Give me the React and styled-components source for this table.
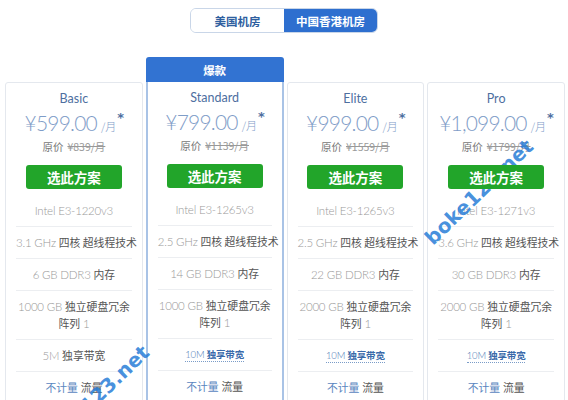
import React from "react"
import styled, { createGlobalStyle } from "styled-components"

const GlobalStyle = createGlobalStyle`
  html, body {
    margin: 0;
    padding: 0;
    background: #fff;
  }
  body {
    font-family: Lato, "Noto Sans CJK SC", "Liberation Sans", sans-serif;
    overflow: hidden;
  }
`

const Page = styled.div`
  position: relative;
  width: 568px;
  height: 400px;
  overflow: hidden;
`

const Toggle = styled.div`
  display: flex;
  width: 188px;
  height: 25px;
  margin: 8px auto 0;
  border: 1px solid #c9d6e8;
  border-radius: 6px;
  overflow: hidden;
  box-sizing: border-box;
`

const ToggleButton = styled.div`
  flex: 1;
  display: flex;
  align-items: center;
  justify-content: center;
  font-family: "Noto Sans CJK SC", sans-serif;
  font-size: 11.5px;
  font-weight: 700;
  color: ${p => (p.active ? "#fff" : "#2f5f9f")};
  background: ${p => (p.active ? "#2e6fcf" : "#fff")};
`

const Cards = styled.div`
  display: grid;
  grid-template-columns: repeat(4, minmax(0, 1fr));
  gap: 3px;
  padding: 0 3px 0 5px;
  margin-top: 24px;
  align-items: start;
`

const Column = styled.div`
  display: flex;
  flex-direction: column;
  min-width: 0;
  margin-top: ${p => (p.featured ? "0" : "25px")};
`

const Badge = styled.div`
  height: 25px;
  display: flex;
  align-items: center;
  justify-content: center;
  background: #3273d2;
  color: #fff;
  font-family: "Noto Sans CJK SC", sans-serif;
  font-size: 11.5px;
  font-weight: 700;
  border-radius: 3px 3px 0 0;
`

const Card = styled.div`
  background: #fff;
  border: 1px solid ${p => (p.featured ? "#a9c3e6" : "#e4e8ee")};
  border-width: ${p => (p.featured ? "0 2px 2px" : "1px")};
  border-radius: ${p => (p.featured ? "0" : "3px")};
  padding: 6px 10px 0;
  text-align: center;
  height: 360px;
`

const Title = styled.div`
  font-size: 12.5px;
  color: #4e6f9f;
  line-height: 20px;
`

const Price = styled.div`
  margin-top: 2px;
  color: #7f9dc8;
  font-size: 21px;
  font-weight: 300;
  letter-spacing: -0.8px;
  line-height: 24px;
  white-space: nowrap;
`

const Per = styled.span`
  font-size: 11px;
  letter-spacing: 0;
  font-family: "Noto Sans CJK SC", sans-serif;
  margin-left: 4px;
`

const Star = styled.span`
  position: relative;
  top: -9px;
  font-family: "DejaVu Sans", sans-serif;
  font-size: 13px;
  font-weight: 700;
  line-height: 0;
  color: #4e6f9f;
  margin-left: 1px;
`

const Original = styled.div`
  margin-top: 1px;
  font-family: "Noto Sans CJK SC", sans-serif;
  font-size: 10.5px;
  color: #777;
  line-height: 16px;
  del {
    color: #999;
    margin-left: 4px;
  }
`

const Choose = styled.div`
  position: relative;
  z-index: 2;
  width: 96px;
  height: 24px;
  margin: 10px auto 0;
  background: #22a52a;
  border-radius: 3px;
  color: #fff;
  font-family: "Noto Sans CJK SC", sans-serif;
  font-weight: 700;
  font-size: 13.5px;
  line-height: 24px;
`

const Features = styled.ul`
  list-style: none;
  margin: 7px 0 0;
  padding: 0;
`

const Feature = styled.li`
  padding: 7px 0;
  line-height: 16px;
  font-size: 11.5px;
  font-weight: 300;
  color: #999;
  letter-spacing: -0.2px;
  border-bottom: 1px solid #eceef1;
  white-space: nowrap;
`

const Zh = styled.span`
  font-family: "Noto Sans CJK SC", sans-serif;
  font-size: 10.8px;
  font-weight: 400;
  letter-spacing: 0;
  color: ${p => (p.blue ? "#5a86c0" : "#555")};
`

const Band = styled.span`
  font-size: 9.5px;
  color: #4a78b4;
  border-bottom: 1px dotted #7a9cc8;
  padding-bottom: 1px;
  span {
    font-family: "Noto Sans CJK SC", sans-serif;
    font-weight: 700;
    color: #3a6aaa;
  }
`

const Watermark = styled.div`
  position: absolute;
  z-index: 1;
  left: ${p => p.x}px;
  top: ${p => p.y}px;
  transform: translate(-50%, -50%) rotate(-44deg);
  font-family: "DejaVu Sans", sans-serif;
  font-weight: 700;
  font-size: 20px;
  color: rgba(40, 125, 215, 0.85);
  white-space: nowrap;
  pointer-events: none;
`

const plans = [
  { name: "Basic", price: "599.00", old: "¥839/月", cpu: "Intel E3-1220v3", ghz: "3.1 GHz", ram: "6 GB", disk: "1000 GB", band: "5M" },
  { name: "Standard", price: "799.00", old: "¥1139/月", cpu: "Intel E3-1265v3", ghz: "2.5 GHz", ram: "14 GB", disk: "1000 GB", band: "10M", featured: true },
  { name: "Elite", price: "999.00", old: "¥1559/月", cpu: "Intel E3-1265v3", ghz: "2.5 GHz", ram: "22 GB", disk: "2000 GB", band: "10M" },
  { name: "Pro", price: "1,099.00", old: "¥1799/月", cpu: "Intel E3-1271v3", ghz: "3.6 GHz", ram: "30 GB", disk: "2000 GB", band: "10M" },
]

function Plan({ plan }) {
  return (
    <Column featured={plan.featured}>
      {plan.featured && <Badge>爆款</Badge>}
      <Card featured={plan.featured}>
        <Title>{plan.name}</Title>
        <Price>
          ¥{plan.price}
          <Per>/月</Per>
          <Star>*</Star>
        </Price>
        <Original>
          原价<del>{plan.old}</del>
        </Original>
        <Choose>选此方案</Choose>
        <Features>
          <Feature>{plan.cpu}</Feature>
          <Feature>
            {plan.ghz} <Zh>四核 超线程技术</Zh>
          </Feature>
          <Feature>
            {plan.ram} DDR3 <Zh>内存</Zh>
          </Feature>
          <Feature>
            {plan.disk} <Zh>独立硬盘冗余</Zh>
            <br />
            <Zh>阵列</Zh> 1
          </Feature>
          <Feature>
            {plan.band === "5M" ? (
              <>
                5M <Zh>独享带宽</Zh>
              </>
            ) : (
              <Band>
                10M <span>独享带宽</span>
              </Band>
            )}
          </Feature>
          <Feature>
            <Zh blue>不计量</Zh> <Zh>流量</Zh>
          </Feature>
        </Features>
      </Card>
    </Column>
  )
}

export default function App() {
  return (
    <Page>
      <GlobalStyle />
      <Toggle>
        <ToggleButton>美国机房</ToggleButton>
        <ToggleButton active>中国香港机房</ToggleButton>
      </Toggle>
      <Cards>
        {plans.map(p => (
          <Plan key={p.name} plan={p} />
        ))}
      </Cards>
      <Watermark x={479} y={192}>boke123.net</Watermark>
      <Watermark x={95} y={398}>boke123.net</Watermark>
    </Page>
  )
}
